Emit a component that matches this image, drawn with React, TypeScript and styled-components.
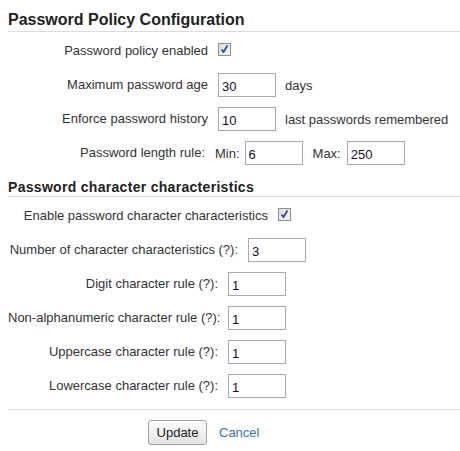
import React from "react";
import styled, { createGlobalStyle } from "styled-components";

const Global = createGlobalStyle`
  html, body { margin: 0; padding: 0; background: #fff; }
  body { font-family: "Liberation Sans", Arial, sans-serif; font-size: 13px; color: #333; }
`;

const Page = styled.div`
  padding: 10px 0 0 8px;
  width: 452px;
`;

const Heading = styled.h2<{ $size: number; $top: number; $spacing?: number }>`
  margin: ${(p) => p.$top}px 0 0 0;
  font-size: ${(p) => p.$size}px;
  line-height: ${(p) => p.$size + 3}px;
  letter-spacing: ${(p) => p.$spacing ?? 0}px;
  font-weight: bold;
  color: #222;
  padding-bottom: ${(p) => (p.$size > 15 ? 2 : 0)}px;
  border-bottom: 1px solid #dcdcdc;
`;

const Rows = styled.div`
  display: flex;
  flex-direction: column;
  margin-top: 2px;
`;

const Row = styled.div`
  display: flex;
  align-items: center;
  height: 34px;
`;

const Label = styled.div<{ $w: number }>`
  width: ${(p) => p.$w}px;
  flex: none;
  text-align: right;
  margin-right: 10px;
  white-space: nowrap;
  color: #333;
  position: relative;
  top: -1px;
`;

const Text = styled.span<{ $ml?: number; $mr?: number }>`
  margin-left: ${(p) => p.$ml ?? 0}px;
  margin-right: ${(p) => p.$mr ?? 0}px;
  color: #333;
  white-space: nowrap;
`;

const Field = styled.input`
  box-sizing: border-box;
  width: 58px;
  height: 24px;
  border: 1px solid #a9a9a9;
  padding: 2px 3px 0;
  font-family: "Liberation Sans", Arial, sans-serif;
  font-size: 13px;
  color: #1a0a2a;
  background: #fff;
  outline: none;
`;

const Check = styled.span`
  box-sizing: border-box;
  display: inline-flex;
  align-items: center;
  justify-content: center;
  width: 13px;
  height: 13px;
  border: 1px solid #8e8f8f;
  background: linear-gradient(135deg, #dcdcdc 0%, #f6f6f6 100%);
  margin-top: -3px;
`;

const Divider = styled.hr`
  margin: 6px 0 0;
  border: 0;
  border-top: 1px solid #dcdcdc;
  height: 0;
`;

const Actions = styled.div`
  display: flex;
  align-items: center;
  gap: 12px;
  padding: 10px 0 0 140px;
`;

const Button = styled.button`
  height: 25px;
  width: 59px;
  border: 1px solid #a3a3a3;
  border-radius: 3px;
  background: linear-gradient(#fdfdfd, #e3e3e3);
  font-family: "Liberation Sans", Arial, sans-serif;
  font-size: 13px;
  color: #222;
  padding: 0;
`;

const LinkText = styled.a`
  color: #3b73af;
  text-decoration: none;
  font-size: 13px;
`;

const CheckBox = () => (
  <Check>
    <svg width="11" height="11" viewBox="0 0 11 11">
      <path d="M2.5 5.5 L4.5 8 L8.5 1.5" fill="none" stroke="#2b4d9c" strokeWidth="1.8" />
    </svg>
  </Check>
);

const charRules: [string, number, string][] = [
  ["Number of character characteristics (?):", 230, "3"],
  ["Digit character rule (?):", 210, "1"],
  ["Non-alphanumeric character rule (?):", 210, "1"],
  ["Uppercase character rule (?):", 210, "1"],
  ["Lowercase character rule (?):", 210, "1"],
];

export default function App() {
  return (
    <Page>
      <Global />
      <Heading $size={16} $top={0}>Password Policy Configuration</Heading>
      <Rows>
        <Row>
          <Label $w={200}>Password policy enabled</Label>
          <CheckBox />
        </Row>
        <Row>
          <Label $w={200}>Maximum password age</Label>
          <Field defaultValue="30" />
          <Text $ml={9}>days</Text>
        </Row>
        <Row>
          <Label $w={200}>Enforce password history</Label>
          <Field defaultValue="10" />
          <Text $ml={9}>last passwords remembered</Text>
        </Row>
        <Row>
          <Label $w={197}>Password length rule:</Label>
          <Text $mr={5}>Min:</Text>
          <Field defaultValue="6" />
          <Text $ml={10} $mr={6}>Max:</Text>
          <Field defaultValue="250" />
        </Row>
      </Rows>
      <Heading $size={14} $top={9} $spacing={0.3}>Password character characteristics</Heading>
      <Rows>
        <Row>
          <Label $w={260}>Enable password character characteristics</Label>
          <CheckBox />
        </Row>
        {charRules.map(([label, w, v]) => (
          <Row key={label}>
            <Label $w={w}>{label}</Label>
            <Field defaultValue={v} />
          </Row>
        ))}
      </Rows>
      <Divider />
      <Actions>
        <Button>Update</Button>
        <LinkText href="#">Cancel</LinkText>
      </Actions>
    </Page>
  );
}
